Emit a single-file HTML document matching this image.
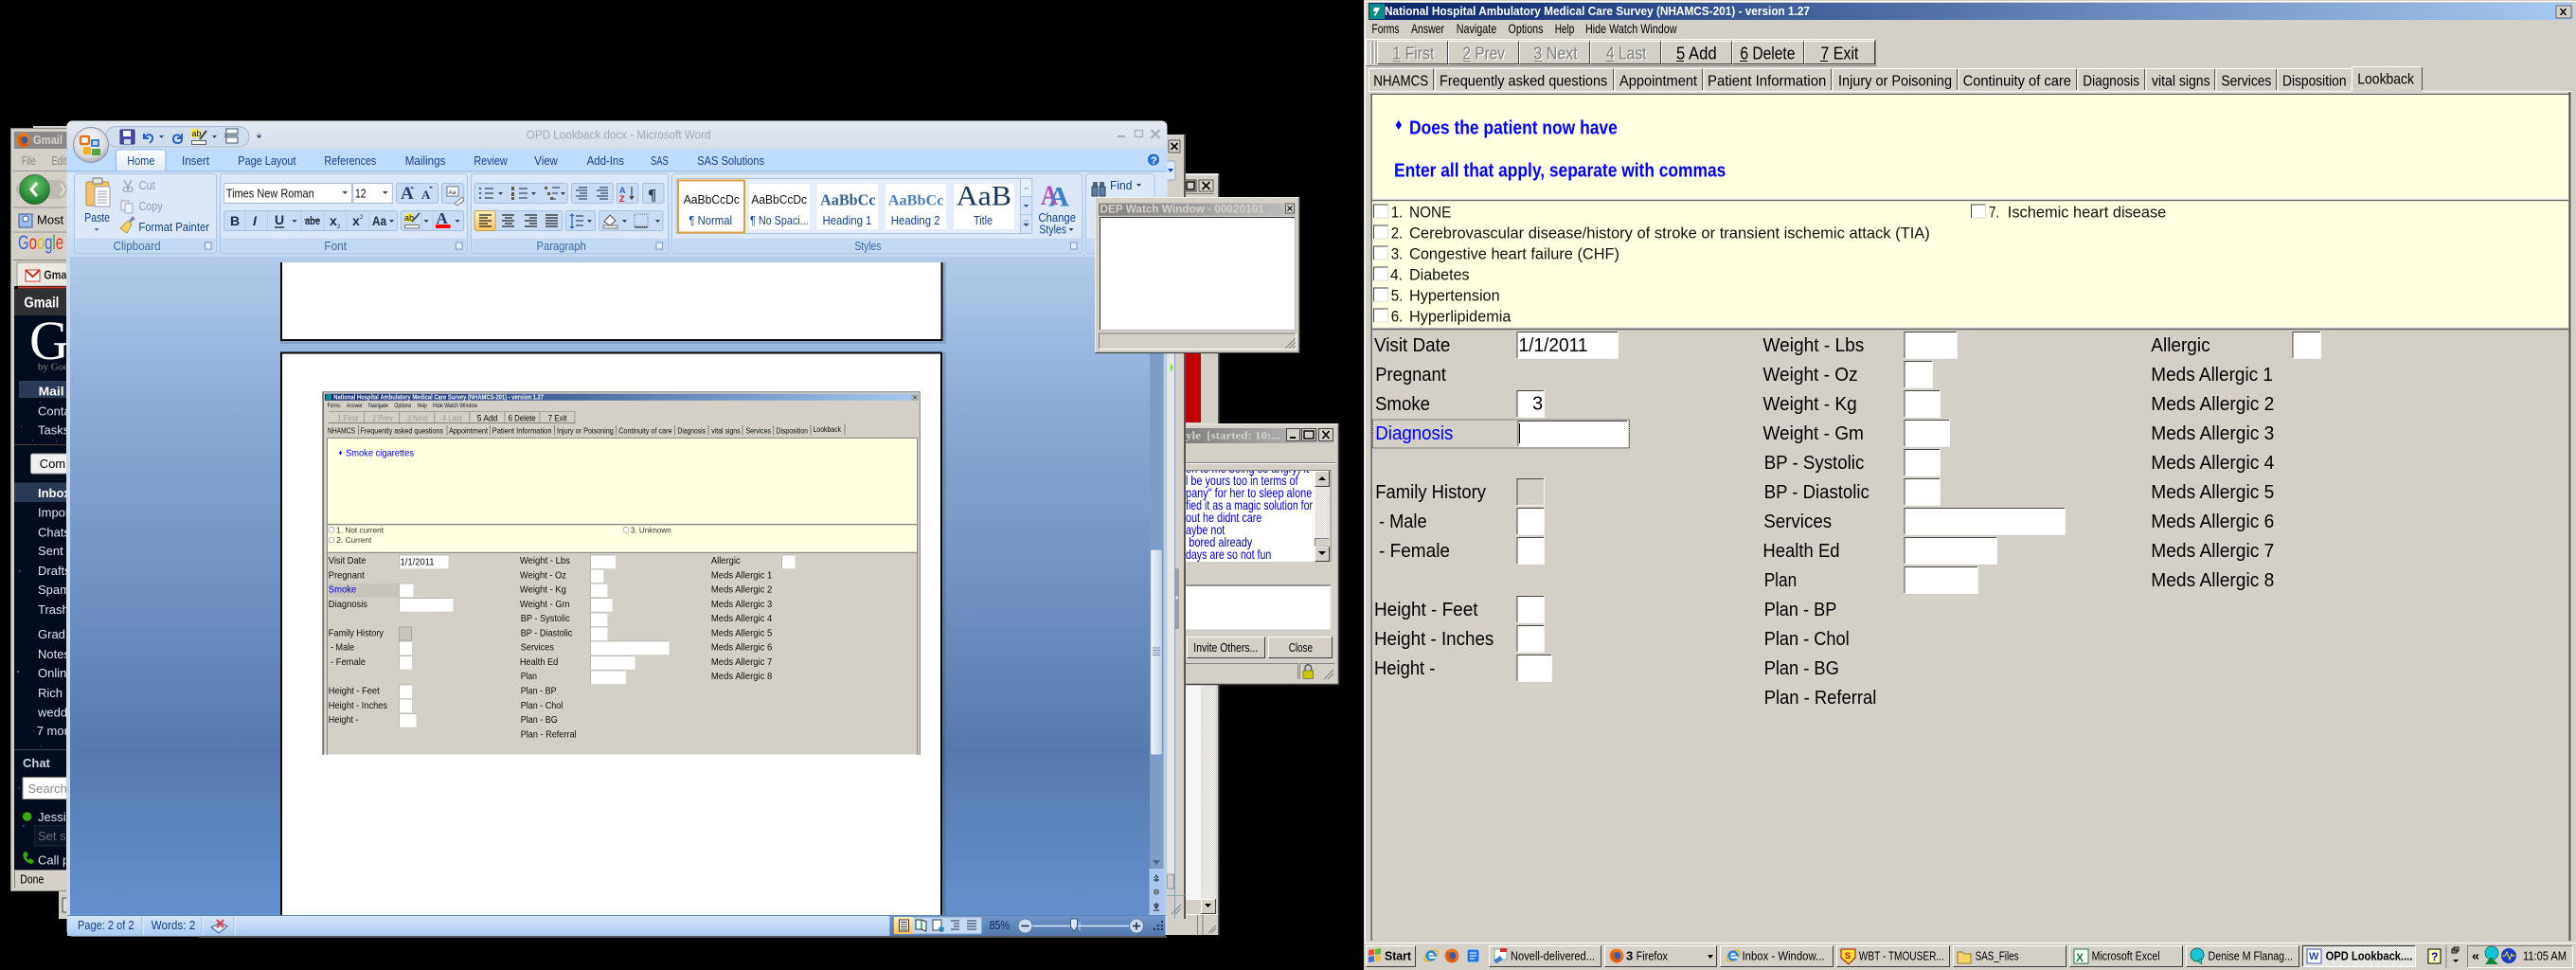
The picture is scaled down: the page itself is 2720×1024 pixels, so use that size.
<!DOCTYPE html>
<html><head><meta charset="utf-8"><title>OPD Lookback</title>
<style>
html,body{margin:0;padding:0;background:#000;width:2720px;height:1024px;overflow:hidden}
svg{display:block}
text{font-family:"Liberation Sans",sans-serif;white-space:pre}
.s{font-family:"Liberation Serif",serif}
.n{fill:none}
.hl{fill:none;stroke:#fff;stroke-width:1}
.sd{fill:none;stroke:#404040;stroke-width:1}
.wd{fill:#15428b}
.lb{fill:#3e6aaa}
.gm{fill:#dfe5ec;font-size:13px}
.b{fill:#fff;stroke:#a8bdd8;stroke-width:1}
.g{fill:#c9dcf4;stroke:#a5bfdf;stroke-width:1}
.ln{stroke:#3d4a5e;stroke-width:1.3;fill:none}
</style></head><body>
<svg width="2720" height="1024" viewBox="0 0 2720 1024" xmlns="http://www.w3.org/2000/svg">
<defs>
<linearGradient id="tb" x1="0" x2="1" y1="0" y2="0"><stop offset="0" stop-color="#0a246a"/><stop offset="1" stop-color="#a6caf0"/></linearGradient>
<linearGradient id="ig" x1="0" x2="1" y1="0" y2="0"><stop offset="0" stop-color="#808080"/><stop offset="1" stop-color="#c0c0c0"/></linearGradient>
<linearGradient id="doc" x1="0" x2="0" y1="0" y2="1"><stop offset="0" stop-color="#b3cbe9"/><stop offset=".22" stop-color="#8cacd8"/><stop offset=".75" stop-color="#567aaf"/><stop offset="1" stop-color="#6390cd"/></linearGradient>
<linearGradient id="rt" x1="0" x2="0" y1="0" y2="1"><stop offset="0" stop-color="#e4e9f1"/><stop offset="1" stop-color="#d6deea"/></linearGradient>
<linearGradient id="rb" x1="0" x2="0" y1="0" y2="1"><stop offset="0" stop-color="#dbe7f7"/><stop offset=".7" stop-color="#d0e0f5"/><stop offset="1" stop-color="#c3d8f2"/></linearGradient>
<linearGradient id="hm" x1="0" x2="0" y1="0" y2="1"><stop offset="0" stop-color="#fff"/><stop offset="1" stop-color="#dce9f9"/></linearGradient>
<linearGradient id="st" x1="0" x2="0" y1="0" y2="1"><stop offset="0" stop-color="#d5e5fa"/><stop offset=".5" stop-color="#c2d8f5"/><stop offset="1" stop-color="#a9c9f0"/></linearGradient>
<linearGradient id="stD" x1="0" x2="0" y1="0" y2="1"><stop offset="0" stop-color="#6f95c9"/><stop offset="1" stop-color="#4f78ad"/></linearGradient>
<linearGradient id="or" x1="0" x2="0" y1="0" y2="1"><stop offset="0" stop-color="#fff0b8"/><stop offset="1" stop-color="#fdc35f"/></linearGradient>
<linearGradient id="sb" x1="0" x2="1" y1="0" y2="0"><stop offset="0" stop-color="#f2f5fa"/><stop offset=".5" stop-color="#d8e2f0"/><stop offset="1" stop-color="#c4d2e6"/></linearGradient>
<radialGradient id="ob" cx=".45" cy=".35" r=".7"><stop offset="0" stop-color="#fff"/><stop offset=".7" stop-color="#d5d8dc"/><stop offset="1" stop-color="#9aa1aa"/></radialGradient>
<radialGradient id="grn" cx=".5" cy=".35" r=".7"><stop offset="0" stop-color="#6cc86c"/><stop offset="1" stop-color="#0d6e1d"/></radialGradient>
<pattern id="dth" width="2" height="2" patternUnits="userSpaceOnUse"><rect width="2" height="2" fill="#fff"/><rect width="1" height="1" fill="#d4d0c8"/><rect x="1" y="1" width="1" height="1" fill="#d4d0c8"/></pattern>
<filter id="bl" x="0" y="0" width="1" height="1"><feGaussianBlur stdDeviation=".25"/></filter>
<g id="ff"><circle cx="8" cy="8" r="7.5" fill="#e9781f"/><circle cx="8.5" cy="8" r="4" fill="#3c5aa8"/><path d="M3 3C1 8 3 14 8 15c4 0 7-3 7-6-1 3-4 4-6 3C6 11 5 8 6 5 5 5 4 4 3 3z" fill="#d9590f"/></g>
<g id="ie"><ellipse cx="8" cy="8" rx="8" ry="4.5" transform="rotate(-35 8 8)" fill="none" stroke="#e8b21e" stroke-width="1.4"/><circle cx="8" cy="8" r="5.6" fill="#2f87d8"/><circle cx="8" cy="8" r="3" fill="#fff"/><rect x="5" y="7.3" width="6" height="1.4" fill="#2f87d8"/><rect x="9" y="8.7" width="4" height="2" fill="#fff"/></g>
<g id="q"><circle cx="8" cy="7" r="7" fill="#17c4d6" stroke="#063" stroke-width=".8"/><path d="M8 13l5 4-1-6z" fill="#17c4d6" stroke="#063" stroke-width=".6"/></g>
</defs>

<rect width="2720" height="1024" fill="#000"/>

<!-- ========== RIGHT WINDOW ========== -->
<rect x="1440" y="0" width="1280" height="996" fill="#d4d0c8"/>
<rect x="1441" y="1" width="1279" height="1" fill="#fff"/>
<rect x="1441" y="1" width="1" height="994" fill="#fff"/>
<rect x="1445" y="3" width="1272" height="18" fill="url(#tb)"/>
<rect x="1446" y="4" width="16" height="16" fill="#0a8a8a"/><path d="M1451 8h6l-2 4-3 5-1-1 2-4h-3z" fill="#fff"/>
<text x="1462" y="16" font-size="13" font-weight="bold" fill="#fff" textLength="449" lengthAdjust="spacingAndGlyphs">National Hospital Ambulatory Medical Care Survey (NHAMCS-201) - version 1.27</text>
<rect x="2699" y="6" width="16" height="13" fill="#d4d0c8" stroke="#404040" stroke-width=".7"/><path d="M2703.5 9l6 7m0-7l-6 7" stroke="#000" stroke-width="1.4"/>

<g font-size="14" fill="#000">
<text x="1448.5" y="35" textLength="29" lengthAdjust="spacingAndGlyphs">Forms</text>
<text x="1490" y="35" textLength="35" lengthAdjust="spacingAndGlyphs">Answer</text>
<text x="1537.7" y="35" textLength="42.5" lengthAdjust="spacingAndGlyphs">Navigate</text>
<text x="1592.5" y="35" textLength="37" lengthAdjust="spacingAndGlyphs">Options</text>
<text x="1641.7" y="35" textLength="20.6" lengthAdjust="spacingAndGlyphs">Help</text>
<text x="1674" y="35" textLength="96.5" lengthAdjust="spacingAndGlyphs">Hide Watch Window</text>
</g>

<!-- toolbar -->
<path class="hl" d="M1442.5 69V41.5H1980"/><path d="M1442.5 69.5H1980.5V41.5" fill="none" stroke="#808080"/>
<path d="M1447.5 44V67M1451.5 44V67" stroke="#fff" stroke-width="1" fill="none"/><path d="M1449 44V67M1453 44V67" stroke="#808080" stroke-width="1" fill="none"/>
<g>
<path class="hl" d="M1454.5 67V43.5H1528M1529.5 67V43.5H1603M1604.5 67V43.5H1678M1679.5 67V43.5H1753M1754.5 67V43.5H1828M1829.5 67V43.5H1904M1905.5 67V43.5H1979"/>
<path class="sd" d="M1454.5 67.5H1528.5V43.5M1529.5 67.5H1603.5V43.5M1604.5 67.5H1678.5V43.5M1679.5 67.5H1753.5V43.5M1754.5 67.5H1828.5V43.5M1829.5 67.5H1904.5V43.5M1905.5 67.5H1979.5V43.5"/>
</g>
<g font-size="18" fill="#fff">
<text x="1471.4" y="63.7" textLength="44" lengthAdjust="spacingAndGlyphs">1 First</text>
<text x="1545.5" y="63.7" textLength="44.5" lengthAdjust="spacingAndGlyphs">2 Prev</text>
<text x="1620.4" y="63.7" textLength="46.3" lengthAdjust="spacingAndGlyphs">3 Next</text>
<text x="1697" y="63.7" textLength="42.5" lengthAdjust="spacingAndGlyphs">4 Last</text>
</g>
<g font-size="18" fill="#808080">
<text x="1470.4" y="62.7" textLength="44" lengthAdjust="spacingAndGlyphs">1 First</text>
<text x="1544.5" y="62.7" textLength="44.5" lengthAdjust="spacingAndGlyphs">2 Prev</text>
<text x="1619.4" y="62.7" textLength="46.3" lengthAdjust="spacingAndGlyphs">3 Next</text>
<text x="1696" y="62.7" textLength="42.5" lengthAdjust="spacingAndGlyphs">4 Last</text>
</g>
<g font-size="18" fill="#000">
<text x="1770" y="62.7" textLength="42.6" lengthAdjust="spacingAndGlyphs">5 Add</text>
<text x="1837.4" y="62.7" textLength="58" lengthAdjust="spacingAndGlyphs">6 Delete</text>
<text x="1922.4" y="62.7" textLength="40" lengthAdjust="spacingAndGlyphs">7 Exit</text>
</g>
<path d="M1471 64.5h8M1545 64.5h8M1620 64.5h8M1696 64.5h8" stroke="#808080"/><path d="M1770 64.5h8M1837 64.5h8M1922 64.5h8" stroke="#000"/>

<!-- tabs -->
<path class="hl" d="M1445.5 96V72.5H1513M1515.5 96V72.5H1703M1705 96V72.5H1797M1799 96V72.5H1933M1935 96V72.5H2066M2068 96V72.5H2192M2194 96V72.5H2264M2266 96V72.5H2339M2340 96V72.5H2404M2405 96V72.5H2482M2483.5 96V70.5H2557"/>
<path d="M1513.5 73V95M1703.5 73V95M1797.5 73V95M1933.5 73V95M2066.5 73V95M2192.5 73V95M2264.5 73V95M2338.5 73V95M2403.5 73V95M2557.5 71V95" stroke="#555" fill="none"/>
<path d="M1445 96.5H2483M2558 96.5H2716" stroke="#fff" fill="none"/>
<g font-size="16" fill="#000">
<text x="1450.2" y="90.7" textLength="58" lengthAdjust="spacingAndGlyphs">NHAMCS</text>
<text x="1520" y="90.7" textLength="177.3" lengthAdjust="spacingAndGlyphs">Frequently asked questions</text>
<text x="1710" y="90.7" textLength="82" lengthAdjust="spacingAndGlyphs">Appointment</text>
<text x="1803" y="90.7" textLength="125.3" lengthAdjust="spacingAndGlyphs">Patient Information</text>
<text x="1941" y="90.7" textLength="120" lengthAdjust="spacingAndGlyphs">Injury or Poisoning</text>
<text x="2072.6" y="90.7" textLength="114.4" lengthAdjust="spacingAndGlyphs">Continuity of care</text>
<text x="2199.3" y="90.7" textLength="59.7" lengthAdjust="spacingAndGlyphs">Diagnosis</text>
<text x="2272" y="90.7" textLength="61.6" lengthAdjust="spacingAndGlyphs">vital signs</text>
<text x="2345.4" y="90.7" textLength="53" lengthAdjust="spacingAndGlyphs">Services</text>
<text x="2410" y="90.7" textLength="67.5" lengthAdjust="spacingAndGlyphs">Disposition</text>
<text x="2489.3" y="88.3" textLength="59.7" lengthAdjust="spacingAndGlyphs">Lookback</text>
</g>
<!-- frame -->
<rect x="1447.5" y="99" width="1265" height="1.3" fill="#555"/>
<rect x="1447.5" y="99" width="1.3" height="894" fill="#555"/>
<rect x="2712.4" y="97" width="2" height="896" fill="#555"/>
<rect x="1449" y="100" width="1263" height="109.5" fill="#ffffe1"/>
<rect x="1449" y="209.5" width="1263" height="1" fill="#eee"/><rect x="1449" y="211" width="1263" height="1.3" fill="#666"/>
<rect x="1449" y="212.3" width="1263" height="133" fill="#ffffe1"/>
<rect x="1449" y="345.3" width="1263" height="1" fill="#eee"/><rect x="1449" y="346.7" width="1263" height="1.5" fill="#666"/>

<path d="M1476.8 127l3.2 5-3.2 5-3.2-5z" fill="#00f"/>
<text x="1488" y="141.7" font-size="20" font-weight="bold" fill="#00f" textLength="219.8" lengthAdjust="spacingAndGlyphs">Does the patient now have</text>
<text x="1472" y="186.7" font-size="20" font-weight="bold" fill="#00f" textLength="350.3" lengthAdjust="spacingAndGlyphs">Enter all that apply, separate with commas</text>

<!-- checkboxes -->
<path d="M1450.5 216h15v14h-15zM1450.5 238h15v14h-15zM1450.5 260h15v14h-15zM1450.5 282h15v14h-15zM1450.5 304h15v14h-15zM1450.5 326h15v14h-15zM2081.5 216h15v14h-15z" fill="#fff" stroke="#ddd"/>
<path d="M1450.5 230V216H1465.5M1450.5 252V238H1465.5M1450.5 274V260H1465.5M1450.5 296V282H1465.5M1450.5 318V304H1465.5M1450.5 340V326H1465.5M2081.5 230V216H2096.5" class="n" stroke="#444" stroke-width="1"/>
<g font-size="17" fill="#111">
<text x="1468.7" y="229.3" textLength="12.6" lengthAdjust="spacingAndGlyphs">1.</text><text x="1488" y="229.3" textLength="44.3" lengthAdjust="spacingAndGlyphs">NONE</text>
<text x="1468.7" y="251.3" textLength="12.6" lengthAdjust="spacingAndGlyphs">2.</text><text x="1488" y="251.3" textLength="549.8" lengthAdjust="spacingAndGlyphs">Cerebrovascular disease/history of stroke or transient ischemic attack (TIA)</text>
<text x="1468.7" y="273.3" textLength="12.6" lengthAdjust="spacingAndGlyphs">3.</text><text x="1488" y="273.3" textLength="222" lengthAdjust="spacingAndGlyphs">Congestive heart failure (CHF)</text>
<text x="1468" y="295.3" textLength="13" lengthAdjust="spacingAndGlyphs">4.</text><text x="1488" y="295.3" textLength="63.6" lengthAdjust="spacingAndGlyphs">Diabetes</text>
<text x="1468.7" y="317.3" textLength="12.6" lengthAdjust="spacingAndGlyphs">5.</text><text x="1488" y="317.3" textLength="95.6" lengthAdjust="spacingAndGlyphs">Hypertension</text>
<text x="1468.7" y="339.3" textLength="12.6" lengthAdjust="spacingAndGlyphs">6.</text><text x="1488" y="339.3" textLength="107.4" lengthAdjust="spacingAndGlyphs">Hyperlipidemia</text>
<text x="2100" y="229.3" textLength="11.3" lengthAdjust="spacingAndGlyphs">7.</text><text x="2119.8" y="229.3" textLength="167.5" lengthAdjust="spacingAndGlyphs">Ischemic heart disease</text>
</g>

<!-- form inputs -->
<path fill="#fff" d="M1602 350h106v28h-106zM1602 412h28v28h-28zM1603 444h115v27h-115zM1602 536h28v28h-28zM1602 567h28v28h-28zM1602 629h28v28h-28zM1602 660h28v28h-28zM1602 691h36v28h-36zM2011 350h55v28h-55zM2011 381h29v28h-29zM2011 412h37v28h-37zM2011 443h47v28h-47zM2011 474h37v28h-37zM2011 505h37v28h-37zM2011 536h169v28h-169zM2011 567h97v28h-97zM2011 598h77v28h-77zM2421 350h29v28h-29z"/>
<path fill="none" stroke="#f7f6f2" d="M1708.5 350V378.5H1602M1630.5 412V440.5H1602M1718.5 444V471.5H1603M1630.5 505V533.5H1602M1630.5 536V564.5H1602M1630.5 567V595.5H1602M1630.5 629V657.5H1602M1630.5 660V688.5H1602M1638.5 691V719.5H1602M2066.5 350V378.5H2011M2040.5 381V409.5H2011M2048.5 412V440.5H2011M2058.5 443V471.5H2011M2048.5 474V502.5H2011M2048.5 505V533.5H2011M2180.5 536V564.5H2011M2108.5 567V595.5H2011M2088.5 598V626.5H2011M2450.5 350V378.5H2421"/>
<path fill="none" stroke="#4a4a4a" d="M1602 378V350.5H1708M1602 440V412.5H1630M1603 471V444.5H1718M1602 533V505.5H1630M1602 564V536.5H1630M1602 595V567.5H1630M1602 657V629.5H1630M1602 688V660.5H1630M1602 719V691.5H1638M2011 378V350.5H2066M2011 409V381.5H2040M2011 440V412.5H2048M2011 471V443.5H2058M2011 502V474.5H2048M2011 533V505.5H2048M2011 564V536.5H2180M2011 595V567.5H2108M2011 626V598.5H2088M2421 378V350.5H2450"/>
<rect x="1449.5" y="443" width="271" height="30" fill="none" stroke="#333" stroke-width="1" stroke-dasharray="1 1"/>
<rect x="1604" y="447" width="1" height="21" fill="#000"/>

<g font-size="20" fill="#000">
<text x="1603.5" y="371" textLength="73" lengthAdjust="spacingAndGlyphs">1/1/2011</text>
<text x="1618" y="432.7" textLength="9">3</text>
<text x="1451" y="371" textLength="80.4" lengthAdjust="spacingAndGlyphs">Visit Date</text>
<text x="1452.3" y="402" textLength="74.5" lengthAdjust="spacingAndGlyphs">Pregnant</text>
<text x="1452" y="433" textLength="58" lengthAdjust="spacingAndGlyphs">Smoke</text>
<text x="1452.3" y="464" textLength="82.1" fill="#00f" lengthAdjust="spacingAndGlyphs">Diagnosis</text>
<text x="1452.3" y="526" textLength="116.7" lengthAdjust="spacingAndGlyphs">Family History</text>
<text x="1456" y="557" textLength="50.6" lengthAdjust="spacingAndGlyphs">- Male</text>
<text x="1456" y="588" textLength="75" lengthAdjust="spacingAndGlyphs">- Female</text>
<text x="1451" y="650" textLength="109.5" lengthAdjust="spacingAndGlyphs">Height - Feet</text>
<text x="1451" y="681" textLength="126.3" lengthAdjust="spacingAndGlyphs">Height - Inches</text>
<text x="1451" y="712" textLength="64.4" lengthAdjust="spacingAndGlyphs">Height -</text>
<text x="1861.4" y="371" textLength="106.9" lengthAdjust="spacingAndGlyphs">Weight - Lbs</text>
<text x="1861.4" y="402" textLength="100.2" lengthAdjust="spacingAndGlyphs">Weight - Oz</text>
<text x="1861.4" y="433" textLength="99.3" lengthAdjust="spacingAndGlyphs">Weight - Kg</text>
<text x="1861.4" y="464" textLength="106.5" lengthAdjust="spacingAndGlyphs">Weight - Gm</text>
<text x="1862.7" y="495" textLength="105.6" lengthAdjust="spacingAndGlyphs">BP - Systolic</text>
<text x="1862.7" y="526" textLength="111.1" lengthAdjust="spacingAndGlyphs">BP - Diastolic</text>
<text x="1862.2" y="557" textLength="72" lengthAdjust="spacingAndGlyphs">Services</text>
<text x="1861.4" y="588" textLength="81.2" lengthAdjust="spacingAndGlyphs">Health Ed</text>
<text x="1862.7" y="619" textLength="34.5" lengthAdjust="spacingAndGlyphs">Plan</text>
<text x="1862.7" y="650" textLength="76.6" lengthAdjust="spacingAndGlyphs">Plan - BP</text>
<text x="1862.7" y="681" textLength="90" lengthAdjust="spacingAndGlyphs">Plan - Chol</text>
<text x="1862.7" y="712" textLength="79.1" lengthAdjust="spacingAndGlyphs">Plan - BG</text>
<text x="1862.7" y="743" textLength="118.6" lengthAdjust="spacingAndGlyphs">Plan - Referral</text>
<text x="2271.3" y="371" textLength="62.3" lengthAdjust="spacingAndGlyphs">Allergic</text>
<text x="2271.3" y="402" textLength="128.7" lengthAdjust="spacingAndGlyphs">Meds Allergic 1</text>
<text x="2271.3" y="433" textLength="130" lengthAdjust="spacingAndGlyphs">Meds Allergic 2</text>
<text x="2271.3" y="464" textLength="130" lengthAdjust="spacingAndGlyphs">Meds Allergic 3</text>
<text x="2271.3" y="495" textLength="130" lengthAdjust="spacingAndGlyphs">Meds Allergic 4</text>
<text x="2271.3" y="526" textLength="130" lengthAdjust="spacingAndGlyphs">Meds Allergic 5</text>
<text x="2271.3" y="557" textLength="130" lengthAdjust="spacingAndGlyphs">Meds Allergic 6</text>
<text x="2271.3" y="588" textLength="130" lengthAdjust="spacingAndGlyphs">Meds Allergic 7</text>
<text x="2271.3" y="619" textLength="130" lengthAdjust="spacingAndGlyphs">Meds Allergic 8</text>
</g>

<!-- taskbar -->
<rect x="1440" y="995" width="1280" height="29" fill="#d4d0c8"/>
<rect x="1440" y="995" width="1280" height="1" fill="#fff"/>
<path class="hl" d="M1442.5 1020V998.5H1494M1572.5 1020V998.5H1690M1694.5 1020V998.5H1812M1816.5 1020V998.5H1935M1939.5 1020V998.5H2058M2062.5 1020V998.5H2181M2185.5 1020V998.5H2304M2308.5 1020V998.5H2427"/>
<path class="sd" d="M1442.5 1020.5H1494.5V998.5M1572.5 1020.5H1690.5V998.5M1694.5 1020.5H1812.5V998.5M1816.5 1020.5H1935.5V998.5M1939.5 1020.5H2058.5V998.5M2062.5 1020.5H2181.5V998.5M2185.5 1020.5H2304.5V998.5M2308.5 1020.5H2427.5V998.5"/>
<rect x="2431" y="998" width="119" height="22" fill="url(#dth)"/>
<path d="M2431.5 1020V998.5H2550" class="n" stroke="#333"/><path d="M2431.5 1020.5H2550.5V998.5" class="n" stroke="#fff"/>
<!-- start flag -->
<path d="M1445 1003l6-1v6l-6 1z" fill="#e8562a"/><path d="M1452 1002l6-1v6l-6 1z" fill="#6cb33f"/><path d="M1445 1010l6-1v6l-6 1z" fill="#3f6fd1"/><path d="M1452 1009l6-1v6l-6 1z" fill="#f2c12e"/>
<text x="1462" y="1013.5" font-size="13" font-weight="bold" fill="#000" textLength="28" lengthAdjust="spacingAndGlyphs">Start</text>
<use href="#ie" x="1503" y="1001"/><use href="#ff" x="1525" y="1001"/>
<rect x="1549" y="1002" width="13" height="14" rx="2" fill="#2a78d8" stroke="#cde" /><path d="M1552 1006h7M1552 1009h7M1552 1012h5" stroke="#fff"/>
<rect x="1578" y="1002" width="13" height="11" fill="#fff" stroke="#7a8" /><rect x="1584" y="1001" width="7" height="4" fill="#c33"/><path d="M1577 1014l7-5 3 4-7 4z" fill="#3c7cc8"/>
<use href="#ff" x="1699" y="1001"/>
<use href="#ie" x="1822" y="1001"/>
<path d="M1944 1002h15v9l-7 7-8-7z" fill="#f6e23a" stroke="#b00"/><text x="1948" y="1012" font-size="9" font-weight="bold" fill="#c00">S</text>
<path d="M2067 1005h5l2 2h7v10h-14z" fill="#f5d66a" stroke="#997a20"/>
<rect x="2190" y="1002" width="15" height="15" fill="#fff" stroke="#1d7a3a"/><text x="2192" y="1015" font-size="12" font-weight="bold" fill="#1d7a3a">X</text>
<use href="#q" x="2312" y="1001"/>
<rect x="2436" y="1002" width="15" height="15" fill="#fff" stroke="#3c5aa8"/><text x="2438" y="1013" font-size="11" font-weight="bold" fill="#2a4a9a">W</text>
<g font-size="13" fill="#000">
<text x="1595" y="1013.5" textLength="89" lengthAdjust="spacingAndGlyphs">Novell-delivered...</text>
<text x="1717" y="1013.5" font-weight="bold" textLength="7">3</text>
<text x="1727.6" y="1013.5" textLength="33.4" lengthAdjust="spacingAndGlyphs">Firefox</text>
<text x="1839.5" y="1013.5" textLength="87" lengthAdjust="spacingAndGlyphs">Inbox - Window...</text>
<text x="1962.8" y="1013.5" textLength="90" lengthAdjust="spacingAndGlyphs">WBT - TMOUSER...</text>
<text x="2085.7" y="1013.5" textLength="45.8" lengthAdjust="spacingAndGlyphs">SAS_Files</text>
<text x="2208.6" y="1013.5" textLength="72" lengthAdjust="spacingAndGlyphs">Microsoft Excel</text>
<text x="2331.5" y="1013.5" textLength="89.5" lengthAdjust="spacingAndGlyphs">Denise M Flanag...</text>
<text x="2455.6" y="1013.5" font-weight="bold" textLength="91.8" lengthAdjust="spacingAndGlyphs">OPD Lookback....</text>
<text x="2664" y="1013.5" textLength="46" lengthAdjust="spacingAndGlyphs">11:05 AM</text>
</g>
<path d="M1803 1008h6l-3 4z" fill="#000"/>
<rect x="2564" y="1002" width="13" height="15" fill="#ffffb0" stroke="#000"/><text x="2567" y="1014" font-size="12" font-weight="bold" fill="#00a">?</text>
<rect x="2582.5" y="998" width="1" height="24" fill="#808080"/>
<rect x="2589" y="1002" width="5" height="4" fill="none" stroke="#000"/><rect x="2591" y="1000" width="5" height="4" fill="none" stroke="#000"/>
<path d="M2590 1013h6l-3 3z" fill="#000"/>
<path d="M2605.5 1021V998.5H2716" class="n" stroke="#808080"/><path d="M2605.5 1021.5H2716.5V998" class="n" stroke="#fff"/>
<text x="2610" y="1013.5" font-size="13" font-weight="bold" fill="#000" textLength="8" lengthAdjust="spacingAndGlyphs">«</text>
<circle cx="2631" cy="1006" r="7" fill="#17c4d6" stroke="#063" stroke-width=".7"/><path d="M2624 1018l6-8 8 8z" fill="#0c8c3a"/>
<circle cx="2649" cy="1009" r="8" fill="#1c3cc8"/><path d="M2642 1009h3l2-4 3 8 2-6 1 2h3" class="n" stroke="#ee0" stroke-width="1"/>

<!-- ========== GMAIL / FIREFOX (behind Word) ========== -->
<rect x="35" y="133" width="36" height="4" fill="#d4d0c8"/>
<rect x="11" y="135" width="60" height="806" fill="#d4d0c8"/>
<rect x="11.5" y="135.5" width="70" height="805" fill="none" stroke="#888"/>
<rect x="15" y="139" width="56" height="18" fill="#8a8a8a"/>
<use href="#ff" x="17" y="140"/>
<text x="35" y="152" font-size="13" font-weight="bold" fill="#d4d0c8" textLength="31" lengthAdjust="spacingAndGlyphs">Gmail</text>
<text x="22.8" y="174" font-size="13" fill="#8c8a84" textLength="15" lengthAdjust="spacingAndGlyphs">File</text>
<text x="54.5" y="174" font-size="13" fill="#8c8a84" textLength="16" lengthAdjust="spacingAndGlyphs">Edit</text>
<rect x="14" y="180" width="57" height="1" fill="#999"/>
<rect x="17" y="190" width="54" height="20" rx="10" fill="#bdbab2"/>
<ellipse cx="36.6" cy="200" rx="16" ry="15.7" fill="url(#grn)" stroke="#555" stroke-width=".6"/>
<path d="M39 193l-6 7 6 7" fill="none" stroke="#fff" stroke-width="3"/>
<path d="M64 194l4 6-4 6" fill="none" stroke="#e6e4de" stroke-width="2"/>
<rect x="14" y="218.5" width="57" height="1" fill="#999"/>
<rect x="20" y="226" width="14" height="14" fill="#9dbbe8" stroke="#3a5a9a"/><circle cx="27" cy="231" r="3" fill="#fff" stroke="#3a5a9a"/>
<text x="39" y="236.7" font-size="13" fill="#000">Most Visited</text>
<rect x="14" y="244.5" width="57" height="1" fill="#999"/>
<text x="19" y="263" font-size="21" textLength="48" lengthAdjust="spacingAndGlyphs"><tspan fill="#3a66d6">G</tspan><tspan fill="#d8342a">o</tspan><tspan fill="#e6b31e">o</tspan><tspan fill="#3a66d6">g</tspan><tspan fill="#2e9e44">l</tspan><tspan fill="#d8342a">e</tspan></text>
<rect x="14" y="274" width="57" height="1" fill="#808080"/>
<path d="M18 302V279q0-2 2-2h51v25z" fill="#ece9e2" stroke="#9a978f"/>
<rect x="27" y="285" width="15" height="12" fill="#fff" stroke="#c33"/><path d="M27 285l7.5 7 7.5-7" fill="none" stroke="#d22" stroke-width="2"/>
<text x="46.4" y="294.7" font-size="13" font-weight="bold" fill="#222" textLength="30" lengthAdjust="spacingAndGlyphs">Gmail</text>
<rect x="15" y="302" width="56" height="616" fill="#030c1c"/>
<rect x="19" y="302.5" width="52" height="2" fill="#c43b2c"/>
<rect x="15" y="305" width="56" height="28" fill="#2f3033"/>
<text x="25.4" y="324.7" font-size="16" font-weight="bold" fill="#fff" textLength="37" lengthAdjust="spacingAndGlyphs">Gmail</text>
<text x="31" y="379" class="s" font-size="58" fill="#fff">G</text>
<text x="40" y="390.7" class="s" font-size="11" fill="#888">by Google</text>
<rect x="20" y="402" width="51" height="18" fill="#2a3a55"/>
<text x="40.6" y="417.7" font-size="13" font-weight="bold" fill="#fff" textLength="27" lengthAdjust="spacingAndGlyphs">Mail</text>
<g class="gm">
<text x="40" y="438.5" fill="#dfe5ec">Contacts</text>
<text x="40" y="458.5" fill="#dfe5ec">Tasks</text>
</g>
<rect x="15" y="469" width="56" height="1" fill="#4a3a30"/>
<rect x="32.5" y="479" width="50" height="21" rx="2" fill="#f0f0f0" stroke="#999"/>
<text x="41.7" y="494" font-size="13" fill="#000">Compose</text>
<rect x="15" y="509.5" width="56" height="20.5" fill="#2a3a55"/>
<text x="40" y="525" font-size="13" font-weight="bold" fill="#fff">Inbox</text>
<g font-size="13" fill="#dfe5ec">
<text x="40" y="545.6">Important</text><text x="40" y="566.4">Chats</text><text x="40" y="586">Sent</text><text x="40" y="606.8">Drafts</text><text x="40" y="627.2">Spam</text><text x="40" y="648">Trash</text><text x="40" y="674.2">Grad</text><text x="40" y="695">Notes</text><text x="40" y="715">Online</text><text x="40" y="735.9">Rich</text><text x="40" y="756.3">wedding</text><text x="38.7" y="776">7 more</text>
</g>
<rect x="15" y="791" width="56" height="1" fill="#3a4658"/>
<text x="24" y="809.8" font-size="13" font-weight="bold" fill="#c8d4e0">Chat</text>
<rect x="24" y="820.6" width="60" height="23" fill="#fff" stroke="#888"/>
<text x="29.5" y="837" font-size="13" fill="#888">Search</text>
<circle cx="28.7" cy="862" r="4.8" fill="#39a80f"/>
<text x="40" y="866.8" font-size="13" fill="#dfe5ec">Jessica</text>
<rect x="36.7" y="871.5" width="40" height="21.5" fill="#0a1424" stroke="#1d2736"/>
<text x="40" y="887" font-size="13" fill="#666c74">Set status</text>
<path d="M25 900c-2 5 2 11 9 12l2-3-4-3-2 2c-1-1-2-2-2-4l2-1-2-4z" fill="#39a80f"/>
<text x="40" y="912.3" font-size="13" fill="#dfe5ec">Call phone</text>
<path fill="#3a70c0" d="M51 437h1.5v1.5h-1.5zM22 450h1v1h-1zM20 602h1.5v1.5h-1.5zM18 708h2v2h-2zM34 464h1v1h-1zM59 465h1v1h-1zM44 700h1v1h-1zM19 831h1.5v1.5h-1.5zM24 871h1.5v1.5h-1.5zM35 771h1v1h-1zM43 787h1v1h-1zM42 424h1v1h-1z"/>
<rect x="15" y="918" width="56" height="19" fill="#d4d0c8"/>
<path d="M15.5 937V918.5H71" class="n" stroke="#808080"/>
<text x="21.3" y="932.3" font-size="13" fill="#000" textLength="25" lengthAdjust="spacingAndGlyphs">Done</text>
<rect x="62" y="941" width="9" height="29" fill="#d4d0c8"/><rect x="66" y="948" width="5" height="15" fill="#ddd" stroke="#444"/>

<!-- ========== Behind windows on right of Word ========== -->
<!-- Window B -->
<rect x="1230" y="183" width="57" height="804" fill="#d4d0c8"/>
<rect x="1286" y="183" width="1.5" height="804" fill="#555"/>
<rect x="1245" y="184" width="42" height="1" fill="#fff"/>
<rect x="1251" y="190" width="12" height="12" fill="#d4d0c8" stroke="#333"/><rect x="1253" y="192" width="8" height="8" fill="none" stroke="#000" stroke-width="1.4"/>
<rect x="1266" y="190" width="15" height="12" fill="#d4d0c8" stroke="#555"/><path d="M1269.5 192l8 8m0-8l-8 8" stroke="#000" stroke-width="1.6"/>
<rect x="1252" y="204" width="30" height="1" fill="#808080"/>
<rect x="1252" y="370" width="16" height="76" fill="#c00000"/>
<rect x="1268" y="370" width="16" height="76" fill="#d4d0c8"/>
<rect x="1252" y="722" width="16" height="228" fill="#f6f6f6"/>
<rect x="1268" y="722" width="16" height="244" fill="url(#dth)"/>
<rect x="1268" y="949" width="15" height="15" fill="#d4d0c8"/><path d="M1268.5 964V949.5H1283" class="hl"/><path d="M1268.5 964.5H1283.5V949" class="sd"/><path d="M1272 954h7l-3.5 4z" fill="#000"/>
<path d="M1252 965.5h34" stroke="#fff"/><path d="M1264.5 966v21M1270 966v21" stroke="#808080"/>
<path d="M1276 985l8-8M1279 985l5-5" stroke="#808080"/>

<!-- Window A -->
<rect x="1228" y="142" width="24" height="828" fill="#d4d0c8"/>
<rect x="1250" y="142" width="2" height="828" fill="#555"/>
<rect x="1234" y="148" width="12" height="13" fill="#d4d0c8" stroke="#555"/><path d="M1236.5 151l7 7m0-7l-7 7" stroke="#000" stroke-width="1.6"/>
<rect x="1226" y="170" width="15" height="20" rx="2" fill="#dbe6f7" stroke="#9ab"/><path d="M1233 178l6 0-3 4z" fill="#2040c0"/>
<rect x="1232.7" y="372" width="7.3" height="552" fill="url(#dth)"/>
<rect x="1240" y="372" width="1" height="598" fill="#7f9fc8"/>
<rect x="1241" y="600" width="4" height="64" fill="#a0a0a0"/><path d="M1243.5 629l-2.5 2 2.5 2z" fill="#fff"/>
<path d="M1236 383l3 5-3 5z" fill="#8ddc3e"/>
<rect x="1232.7" y="923" width="7" height="15" fill="#d4d0c8" stroke="#666" stroke-width=".6"/>
<rect x="1229" y="945" width="22" height="1" fill="#8aa"/>
<path d="M1237 965l10-10M1241 965l6-6" stroke="#808080"/>

<!-- Chat window -->
<rect x="1252" y="447" width="161.3" height="275" fill="#d4d0c8"/>
<path d="M1252 722.5H1413.5V447" class="n" stroke="#404040" stroke-width="1.5"/>
<rect x="1252" y="447.5" width="161" height="1" fill="#eee"/>
<rect x="1252" y="452" width="156" height="16" fill="url(#ig)"/>
<text x="1252" y="463.5" font-size="12" font-weight="bold" class="s" fill="#d4d0c8" textLength="100" lengthAdjust="spacingAndGlyphs">yle  [started: 10:...</text>
<rect x="1358.5" y="452.5" width="14" height="13" fill="#d4d0c8" stroke="#444"/><rect x="1362" y="461" width="6" height="2" fill="#000"/>
<rect x="1374.5" y="452.5" width="15" height="13" fill="#d4d0c8" stroke="#444"/><rect x="1377" y="455" width="10" height="8" fill="none" stroke="#000" stroke-width="1.4"/>
<rect x="1392.5" y="452.5" width="15" height="13" fill="#d4d0c8" stroke="#444"/><path d="M1396.5 455l7 8m0-8l-7 8" stroke="#000" stroke-width="1.6"/>
<rect x="1252" y="488" width="158" height="1" fill="#808080"/><rect x="1252" y="489" width="158" height="1" fill="#fff"/>
<rect x="1252" y="497" width="153" height="96" fill="#fff"/>
<path d="M1252 496.5H1405V593" class="n" stroke="#808080"/>
<svg x="1252" y="497" width="136" height="96">
<g font-size="14" fill="#0000c8">
<text x="0" y="2" textLength="130" lengthAdjust="spacingAndGlyphs">en to me being so angry) it</text>
<text x="0" y="15" textLength="118.7" lengthAdjust="spacingAndGlyphs">l be yours too in terms of</text>
<text x="0" y="28" textLength="133.3" lengthAdjust="spacingAndGlyphs">pany" for her to sleep alone</text>
<text x="0" y="41" textLength="134" lengthAdjust="spacingAndGlyphs">fied it as a magic solution for</text>
<text x="0" y="54" textLength="80.3" lengthAdjust="spacingAndGlyphs">out he didnt care</text>
<text x="0" y="67" textLength="41.3" lengthAdjust="spacingAndGlyphs">aybe not</text>
<text x="3.3" y="80" textLength="67" lengthAdjust="spacingAndGlyphs">bored already</text>
<text x="0" y="93" textLength="90.3" lengthAdjust="spacingAndGlyphs">days are so not fun</text>
</g></svg>
<rect x="1388.5" y="497" width="15.5" height="95" fill="url(#dth)"/>
<rect x="1388.5" y="497" width="15" height="16" fill="#d4d0c8"/><path d="M1388.5 513V497.5H1403" class="hl"/><path d="M1388.5 513.5H1403.5V497" class="sd"/><path d="M1392 507h8l-4-4z" fill="#000"/>
<rect x="1388.5" y="568" width="15" height="8" fill="#d4d0c8"/><path d="M1388.5 576V568.5H1403M1388.5 576.5H1403.5" stroke="#808080" fill="none"/>
<rect x="1388.5" y="576.5" width="15" height="16" fill="#d4d0c8"/><path d="M1388.5 592V577H1403" class="hl"/><path d="M1388.5 592.5H1403.5V577" class="sd"/><path d="M1392 582h8l-4 4z" fill="#000"/>
<rect x="1252" y="617.5" width="153" height="47" fill="#fff"/>
<path d="M1252 618H1405" stroke="#444"/><path d="M1405 618V664.5H1252" class="n" stroke="#ddd"/>
<path class="hl" d="M1253.5 694V672.5H1335M1339.5 694V672.5H1406"/>
<path class="sd" d="M1253.5 694.5H1335.5V672.5M1339.5 694.5H1406.5V672.5"/>
<text x="1260.3" y="687.9" font-size="13" fill="#000" textLength="68" lengthAdjust="spacingAndGlyphs">Invite Others...</text>
<text x="1360.7" y="687.9" font-size="13" fill="#000" textLength="25.3" lengthAdjust="spacingAndGlyphs">Close</text>
<path d="M1252 700.5H1370.5V717M1372.5 717V700.5H1409" class="n" stroke="#808080"/>
<rect x="1376" y="708" width="10.7" height="8.4" fill="#c8c800" stroke="#555" stroke-width=".6"/><path d="M1378 708v-3a3.3 3.3 0 0 1 6.6 0v3" class="n" stroke="#555" stroke-width="1.4"/>
<path d="M1398 717l10-10M1402 717l6-6" stroke="#808080"/>

<!-- ========== WORD ========== -->
<rect x="70.5" y="127.5" width="1162" height="861" rx="6" fill="#bfdbff"/>
<path d="M70.5 157V134a6 6 0 0 1 6-6.5H1226a6 6 0 0 1 6 6.5V157z" fill="url(#rt)"/>
<rect x="70.5" y="157" width="1162" height="24" fill="#bfdbff"/>
<rect x="70.5" y="181" width="1162" height="90" fill="url(#rb)"/>
<rect x="70.5" y="180.5" width="1162" height="1" fill="#8db2e3"/>
<rect x="70" y="271" width="4" height="695" fill="#c8d9ee"/>
<rect x="74" y="271" width="1140" height="695" fill="url(#doc)"/>
<rect x="1214" y="271" width="14.5" height="695" fill="#7d9cc6"/>
<rect x="1228.5" y="271" width="3.5" height="695" fill="#b8cde8"/>
<!-- pages -->
<rect x="296" y="277" width="703" height="86" fill="#345" opacity=".22"/>
<rect x="296" y="277" width="699" height="82.5" fill="#fff"/>
<path d="M297 277V359H994.5V277" class="n" stroke="#000" stroke-width="2"/>
<rect x="296" y="372" width="703" height="594" fill="#345" opacity=".22"/>
<rect x="296" y="372" width="699" height="594" fill="#fff"/>
<path d="M297 966V372.5H994V966" class="n" stroke="#000" stroke-width="2"/>

<!-- embedded screenshot -->
<g filter="url(#bl)">
<rect x="340.5" y="413.5" width="631" height="383" fill="#d4d0c8"/>
<path d="M341 797V413.5H971.5V797" class="n" stroke="#333" stroke-width="1.2"/>
<rect x="343" y="415.7" width="627" height="7" fill="url(#tb)"/>
<rect x="344" y="416" width="6" height="6" fill="#0a8a8a"/>
<text x="352.3" y="421.5" font-size="7" font-weight="bold" fill="#fff" textLength="221.7" lengthAdjust="spacingAndGlyphs">National Hospital Ambulatory Medical Care Survey (NHAMCS-201) - version 1.27</text>
<path d="M963 417h6v5h-6z" fill="#d4d0c8" stroke="#555" stroke-width=".4"/><path d="M964.5 418l3 3m0-3l-3 3" stroke="#000" stroke-width=".6"/>
<g font-size="6" fill="#111">
<text x="345.6" y="430" textLength="14" lengthAdjust="spacingAndGlyphs">Forms</text>
<text x="365.8" y="430" textLength="17" lengthAdjust="spacingAndGlyphs">Answer</text>
<text x="389" y="430" textLength="21" lengthAdjust="spacingAndGlyphs">Navigate</text>
<text x="416.3" y="430" textLength="18" lengthAdjust="spacingAndGlyphs">Options</text>
<text x="440.7" y="430" textLength="10" lengthAdjust="spacingAndGlyphs">Help</text>
<text x="457" y="430" textLength="47" lengthAdjust="spacingAndGlyphs">Hide Watch Window</text>
</g>
<path d="M347.5 434.5H607V446.7M384.7 434.5V446.7M421.7 434.5V446.7M458.8 434.5V446.7M495.8 434.5V446.7M532.9 434.5V446.7M569.9 434.5V446.7" class="n" stroke="#777" stroke-width=".6"/>
<path d="M347 446.7H607" stroke="#555" stroke-width=".7"/>
<g font-size="9" fill="#a09d96">
<text x="356" y="444.3" textLength="22" lengthAdjust="spacingAndGlyphs">1 First</text>
<text x="393" y="444.3" textLength="21.6" lengthAdjust="spacingAndGlyphs">2 Prev</text>
<text x="429.7" y="444.3" textLength="22" lengthAdjust="spacingAndGlyphs">3 Next</text>
<text x="466.8" y="444.3" textLength="21" lengthAdjust="spacingAndGlyphs">4 Last</text>
</g>
<g font-size="9" fill="#111">
<text x="503.8" y="444.3" textLength="21.5" lengthAdjust="spacingAndGlyphs">5 Add</text>
<text x="536.7" y="444.3" textLength="29" lengthAdjust="spacingAndGlyphs">6 Delete</text>
<text x="578.7" y="444.3" textLength="19.8" lengthAdjust="spacingAndGlyphs">7 Exit</text>
</g>
<path d="M378.5 449V459M472 449V459M517.5 449V459M585.5 449V459M650.5 449V459M712.5 449V459M748 449V459M784 449V459M816.7 449V459M856 449V459M892 447V459" class="n" stroke="#666" stroke-width=".7"/>
<g font-size="8" fill="#111">
<text x="346" y="457.3" textLength="29" lengthAdjust="spacingAndGlyphs">NHAMCS</text>
<text x="380.5" y="457.3" textLength="87.5" lengthAdjust="spacingAndGlyphs">Frequently asked questions</text>
<text x="474" y="457.3" textLength="41" lengthAdjust="spacingAndGlyphs">Appointment</text>
<text x="519.8" y="457.3" textLength="62.7" lengthAdjust="spacingAndGlyphs">Patient Information</text>
<text x="588" y="457.3" textLength="59.8" lengthAdjust="spacingAndGlyphs">Injury or Poisoning</text>
<text x="653.2" y="457.3" textLength="56.4" lengthAdjust="spacingAndGlyphs">Continuity of care</text>
<text x="715.5" y="457.3" textLength="29.5" lengthAdjust="spacingAndGlyphs">Diagnosis</text>
<text x="751.3" y="457.3" textLength="30.3" lengthAdjust="spacingAndGlyphs">vital signs</text>
<text x="787.5" y="457.3" textLength="26.5" lengthAdjust="spacingAndGlyphs">Services</text>
<text x="819.5" y="457.3" textLength="33.5" lengthAdjust="spacingAndGlyphs">Disposition</text>
<text x="858.6" y="456" textLength="29.4" lengthAdjust="spacingAndGlyphs">Lookback</text>
</g>
<rect x="346" y="462.7" width="622" height="90" fill="#ffffe1"/>
<rect x="346" y="554.7" width="622" height="28" fill="#ffffe1"/>
<path d="M345.5 462V797M968.5 462V797" stroke="#777" stroke-width=".8"/><path d="M345.5 462.3H968M345.5 553.7H968M345.5 583.3H968" stroke="#777" stroke-width=".8"/>
<path d="M359.5 475.5l1.5 2.5-1.5 2.5-1.5-2.5z" fill="#00f"/>
<text x="365" y="481.7" font-size="10" fill="#00f" textLength="72" lengthAdjust="spacingAndGlyphs">Smoke cigarettes</text>
<circle cx="350" cy="559.3" r="3" fill="#fff" stroke="#888" stroke-width=".6"/><circle cx="350" cy="570" r="3" fill="#fff" stroke="#888" stroke-width=".6"/><circle cx="661" cy="559.3" r="3" fill="#fff" stroke="#888" stroke-width=".6"/>
<g font-size="8.5" fill="#333">
<text x="355.3" y="562.3" textLength="49.7" lengthAdjust="spacingAndGlyphs">1. Not current</text>
<text x="355.3" y="573" textLength="37" lengthAdjust="spacingAndGlyphs">2. Current</text>
<text x="665.9" y="562.3" textLength="42.9" lengthAdjust="spacingAndGlyphs">3. Unknown</text>
</g>
<rect x="346.8" y="616" width="74.5" height="14.5" fill="#c9c5bc"/>
<path fill="#fff" stroke="#f4f2ee" stroke-width=".5" d="M421.3 586h52v14h-52zM421.3 616h15v14h-15zM421.3 631.5h57v14h-57zM421.3 677h13.5v14h-13.5zM421.3 692.5h13.5v14h-13.5zM421.3 723h13.5v14h-13.5zM421.3 738h13.5v14h-13.5zM421.3 753.5h18v14h-18zM623.4 586h26.5v14h-26.5zM623.4 601h13.8v14h-13.8zM623.4 616h18v14h-18zM623.4 631.5h23v14h-23zM623.4 647h18v14h-18zM623.4 662h18v14h-18zM623.4 677h83v14h-83zM623.4 692.5h47v14h-47zM623.4 708h37.4v14h-37.4zM825.4 586h14v14h-14z"/>
<path fill="none" stroke="#8a8a86" stroke-width=".6" d="M421.3 600V586H473.3M421.3 630V616H436.3M421.3 645.5V631.5H478.3M421.3 691V677H434.8M421.3 706.5V692.5H434.8M421.3 737V723H434.8M421.3 752V738H434.8M421.3 767.5V753.5H439.3M623.4 600V586H649.9M623.4 615V601H637.2M623.4 630V616H641.4M623.4 645.5V631.5H646.4M623.4 661V647H641.4M623.4 676V662H641.4M623.4 691V677H706.4M623.4 706.5V692.5H670.4M623.4 722V708H660.8M825.4 600V586H839.4"/>
<rect x="421.3" y="662" width="13.5" height="14" fill="#cac6be" stroke="#888" stroke-width=".5"/>
<g font-size="10" fill="#111">
<text x="422.5" y="596.5" textLength="36" lengthAdjust="spacingAndGlyphs">1/1/2011</text>
<text x="346.8" y="595" textLength="39.6" lengthAdjust="spacingAndGlyphs">Visit Date</text>
<text x="346.8" y="610.3" textLength="37.9" lengthAdjust="spacingAndGlyphs">Pregnant</text>
<text x="346.8" y="625.6" textLength="29.5" fill="#00f" lengthAdjust="spacingAndGlyphs">Smoke</text>
<text x="346.8" y="640.8" textLength="41.2" lengthAdjust="spacingAndGlyphs">Diagnosis</text>
<text x="346.8" y="671.4" textLength="58.2" lengthAdjust="spacingAndGlyphs">Family History</text>
<text x="349" y="686.7" textLength="25.2" lengthAdjust="spacingAndGlyphs">- Male</text>
<text x="349" y="702" textLength="37" lengthAdjust="spacingAndGlyphs">- Female</text>
<text x="346.8" y="732.5" textLength="53.9" lengthAdjust="spacingAndGlyphs">Height - Feet</text>
<text x="346.8" y="747.8" textLength="62.2" lengthAdjust="spacingAndGlyphs">Height - Inches</text>
<text x="346.8" y="763" textLength="31.6" lengthAdjust="spacingAndGlyphs">Height -</text>
<text x="548.9" y="595" textLength="53" lengthAdjust="spacingAndGlyphs">Weight - Lbs</text>
<text x="548.9" y="610.3" textLength="49" lengthAdjust="spacingAndGlyphs">Weight - Oz</text>
<text x="548.9" y="625.6" textLength="49" lengthAdjust="spacingAndGlyphs">Weight - Kg</text>
<text x="548.9" y="640.8" textLength="52.6" lengthAdjust="spacingAndGlyphs">Weight - Gm</text>
<text x="549.7" y="656" textLength="52" lengthAdjust="spacingAndGlyphs">BP - Systolic</text>
<text x="549.7" y="671.4" textLength="54.7" lengthAdjust="spacingAndGlyphs">BP - Diastolic</text>
<text x="549.7" y="686.7" textLength="35.3" lengthAdjust="spacingAndGlyphs">Services</text>
<text x="548.9" y="702" textLength="40.4" lengthAdjust="spacingAndGlyphs">Health Ed</text>
<text x="549.7" y="717.2" textLength="17.3" lengthAdjust="spacingAndGlyphs">Plan</text>
<text x="549.7" y="732.5" textLength="37.9" lengthAdjust="spacingAndGlyphs">Plan - BP</text>
<text x="549.7" y="747.8" textLength="44.6" lengthAdjust="spacingAndGlyphs">Plan - Chol</text>
<text x="549.7" y="763" textLength="39.1" lengthAdjust="spacingAndGlyphs">Plan - BG</text>
<text x="549.7" y="778.3" textLength="58.9" lengthAdjust="spacingAndGlyphs">Plan - Referral</text>
<text x="750.9" y="595" textLength="30.7" lengthAdjust="spacingAndGlyphs">Allergic</text>
<text x="750.9" y="610.3" textLength="64.4" lengthAdjust="spacingAndGlyphs">Meds Allergic 1</text>
<text x="750.9" y="625.6" textLength="64.4" lengthAdjust="spacingAndGlyphs">Meds Allergic 2</text>
<text x="750.9" y="640.8" textLength="64.4" lengthAdjust="spacingAndGlyphs">Meds Allergic 3</text>
<text x="750.9" y="656" textLength="64.4" lengthAdjust="spacingAndGlyphs">Meds Allergic 4</text>
<text x="750.9" y="671.4" textLength="64.4" lengthAdjust="spacingAndGlyphs">Meds Allergic 5</text>
<text x="750.9" y="686.7" textLength="64.4" lengthAdjust="spacingAndGlyphs">Meds Allergic 6</text>
<text x="750.9" y="702" textLength="64.4" lengthAdjust="spacingAndGlyphs">Meds Allergic 7</text>
<text x="750.9" y="717.2" textLength="64.4" lengthAdjust="spacingAndGlyphs">Meds Allergic 8</text>
</g>
</g>

<!-- Word title & QAT -->
<rect x="111.6" y="133.5" width="151.4" height="21.5" rx="10.7" fill="#cfdded" stroke="#a9bbd2"/>
<circle cx="96" cy="153" r="18.5" fill="url(#ob)" stroke="#8b95a3"/>
<rect x="85" y="144" width="9" height="8" rx="1" fill="none" stroke="#e4761a" stroke-width="2.4"/>
<rect x="96" y="147" width="9" height="8" fill="#3d7fc9"/><rect x="88" y="155" width="8" height="8" fill="#f0b322"/><rect x="97" y="157" width="9" height="7" fill="#5aa13c"/>
<path d="M98 149h5v4h-5z" fill="#fff" opacity=".7"/>
<rect x="127" y="137" width="15" height="15" rx="1" fill="#4a4aa8" stroke="#2c2c80"/><rect x="130" y="138" width="8" height="6" fill="#fff"/><rect x="131" y="147" width="7" height="5" fill="#cdd"/>
<path d="M152 141v5h5M153 145c3-5 9-3 8 2-.6 2-2 3-3 4" class="n" stroke="#2b64c4" stroke-width="2"/>
<path d="M168 143h5l-2.5 3z" fill="#33507a"/>
<path d="M192 141v5h-5M191 145c-3-4-8-3-8 2 0 3 2 4 5 4 3 0 4-2 4-4" class="n" stroke="#2b64c4" stroke-width="2"/>
<rect x="202" y="136" width="9" height="9" fill="#ffe84c"/><text x="202.5" y="144" font-size="9" fill="#111">ab</text>
<path d="M211 147l7-9" stroke="#444" stroke-width="2"/><rect x="202.5" y="148.5" width="15" height="4" fill="#f4f4f4" stroke="#666"/>
<path d="M224 143h5l-2.5 3z" fill="#33507a"/>
<rect x="239" y="136" width="12" height="5" fill="#fff" stroke="#456"/><rect x="239" y="145" width="12" height="6" fill="#fff" stroke="#456"/><path d="M239 143h12M237 141l2 2-2 2" stroke="#456" fill="none"/>
<path d="M271 141h5M271 143h5l-2.5 3z" fill="#33507a" stroke="#33507a" stroke-width=".4"/>
<text x="555.8" y="146.7" font-size="13" fill="#a1a9b5" textLength="194.7" lengthAdjust="spacingAndGlyphs">OPD Lookback.docx - Microsoft Word</text>
<rect x="1180" y="143" width="8" height="2" fill="#a6aeb9"/><rect x="1198.5" y="137.5" width="8" height="7" fill="none" stroke="#a6aeb9" stroke-width="1.2"/><path d="M1215.5 137l9 9m0-9l-9 9" stroke="#a6aeb9" stroke-width="2"/>

<!-- Word ribbon tabs -->
<path d="M122.5 181V161q0-3 3-3H172q3 0 3 3v20z" fill="url(#hm)" stroke="#8db2e3"/>
<g font-size="13" class="wd">
<text x="134.4" y="174" textLength="29" lengthAdjust="spacingAndGlyphs">Home</text>
<text x="192" y="174" textLength="29" lengthAdjust="spacingAndGlyphs">Insert</text>
<text x="251.3" y="174" textLength="61.2" lengthAdjust="spacingAndGlyphs">Page Layout</text>
<text x="342.4" y="174" textLength="54.9" lengthAdjust="spacingAndGlyphs">References</text>
<text x="427.7" y="174" textLength="42.8" lengthAdjust="spacingAndGlyphs">Mailings</text>
<text x="500.4" y="174" textLength="35.3" lengthAdjust="spacingAndGlyphs">Review</text>
<text x="564.3" y="174" textLength="24.5" lengthAdjust="spacingAndGlyphs">View</text>
<text x="619.6" y="174" textLength="39.4" lengthAdjust="spacingAndGlyphs">Add-Ins</text>
<text x="687" y="174" textLength="18.7" lengthAdjust="spacingAndGlyphs">SAS</text>
<text x="736.3" y="174" textLength="70.7" lengthAdjust="spacingAndGlyphs">SAS Solutions</text>
</g>
<circle cx="1218" cy="168.5" r="6.8" fill="#2a76d4" stroke="#e8f0fa"/><text x="1215" y="173" font-size="11" font-weight="bold" fill="#fff">?</text>

<!-- Ribbon groups -->
<g fill="#dce8f7" stroke="#a8c3e6">
<rect x="78.6" y="183.5" width="150" height="84" rx="3"/>
<rect x="232.6" y="183.5" width="260.7" height="84" rx="3"/>
<rect x="497.5" y="183.5" width="208" height="84" rx="3"/>
<rect x="709.4" y="183.5" width="433.3" height="84" rx="3"/>
<rect x="1146.4" y="183.5" width="72.6" height="84" rx="3"/>
</g>
<g fill="#c3d8f1">
<rect x="79.6" y="251.7" width="148" height="15"/><rect x="233.6" y="251.7" width="258.7" height="15"/><rect x="498.5" y="251.7" width="206" height="15"/><rect x="710.4" y="251.7" width="431.3" height="15"/><rect x="1147.4" y="251.7" width="70.6" height="15"/>
</g>
<g font-size="13" class="lb">
<text x="119.6" y="264" textLength="50" lengthAdjust="spacingAndGlyphs">Clipboard</text>
<text x="342.4" y="264" textLength="23.6" lengthAdjust="spacingAndGlyphs">Font</text>
<text x="566.5" y="264" textLength="52.3" lengthAdjust="spacingAndGlyphs">Paragraph</text>
<text x="902.5" y="264" textLength="27.8" lengthAdjust="spacingAndGlyphs">Styles</text>
</g>
<path d="M216.5 256h6.5v7h-6.5zM481.5 256h6.5v7h-6.5zM693 256h6.5v7h-6.5zM1130.5 256h6.5v7h-6.5z" fill="#e6eef9" stroke="#7c99c0"/>

<!-- Clipboard -->
<rect x="91" y="192" width="24" height="25" rx="2" fill="#f0c46a" stroke="#b08838"/>
<rect x="98" y="188" width="10" height="6" rx="1" fill="#e4e4e4" stroke="#777"/>
<rect x="100" y="197" width="16" height="21" fill="#fff" stroke="#99a"/><path d="M103 202h10M103 205h10M103 208h10M103 211h10M103 214h10" stroke="#99a"/>
<g font-size="13" class="wd"><text x="89.3" y="234" textLength="26.7" lengthAdjust="spacingAndGlyphs">Paste</text>
<text x="146.4" y="244" textLength="74.6" lengthAdjust="spacingAndGlyphs">Format Painter</text></g>
<path d="M99.5 241h5l-2.5 3z" fill="#5577aa"/>
<path d="M131 190l5 9M139 190l-5 9" stroke="#9aa7b8" stroke-width="1.4"/><circle cx="132.5" cy="200" r="2.4" class="n" stroke="#9aa7b8" stroke-width="1.3"/><circle cx="137.5" cy="200" r="2.4" class="n" stroke="#9aa7b8" stroke-width="1.3"/>
<text x="146.4" y="200" font-size="13" fill="#8f9fb4" textLength="17.4" lengthAdjust="spacingAndGlyphs">Cut</text>
<rect x="128" y="212" width="8" height="10" fill="#eef2f7" stroke="#9aa7b8"/><rect x="132" y="215" width="8" height="10" fill="#eef2f7" stroke="#9aa7b8"/>
<text x="146.4" y="222" font-size="13" fill="#8f9fb4" textLength="25.5" lengthAdjust="spacingAndGlyphs">Copy</text>
<path d="M136 233l4-5 3 3-5 4z" fill="#889"/><path d="M127 241l8-8 4 4-5 9z" fill="#f4d35e" stroke="#8a7a30" stroke-width=".6"/>

<!-- Font -->
<rect class="b" x="236.6" y="193.5" width="134.8" height="21"/><rect class="b" x="372.8" y="193.5" width="41.5" height="21"/>
<text x="238.8" y="208.3" font-size="13" fill="#111" textLength="92.9" lengthAdjust="spacingAndGlyphs">Times New Roman</text>
<text x="375" y="208.3" font-size="13" fill="#111" textLength="11.6" lengthAdjust="spacingAndGlyphs">12</text>
<path d="M361.5 202h5.5l-2.7 3zM404 202h5.5l-2.7 3z" fill="#345"/>
<rect class="g" x="418.7" y="193.5" width="43.8" height="21" rx="2"/><rect class="g" x="466.5" y="193.5" width="23.2" height="21" rx="2"/>
<text x="423" y="210" font-size="19" class="s" fill="#24406e" font-weight="bold">A</text><text x="445" y="210" font-size="13" class="s" fill="#24406e" font-weight="bold">A</text>
<path d="M435 197l2 2h-4zM455 199l2-2h-4z" fill="#24406e"/>
<rect x="472" y="197" width="12" height="10" fill="#fff" stroke="#678"/><text x="473.5" y="205" font-size="6.5" fill="#224">Aa</text><path d="M480 215l8-7 2 3-7 6z" fill="#f8f4ee" stroke="#888"/>
<rect class="g" x="236.6" y="222.5" width="183" height="21" rx="2"/><rect class="g" x="423.2" y="222.5" width="66.5" height="21" rx="2"/>
<path d="M259 223v20M282.5 223v20M318 223v20M342 223v20M366 223v20M390 223v20M445 223v20M457 223v20" stroke="#b5cbe6"/>
<g class="s" fill="#1e2a40">
<text x="243" y="238" font-size="14" font-weight="bold">B</text>
<text x="267" y="238" font-size="14" font-style="italic" font-weight="bold">I</text>
<text x="290" y="237" font-size="14" font-weight="bold">U</text>
<text x="322" y="237" font-size="12" font-weight="bold" textLength="16" lengthAdjust="spacingAndGlyphs">abe</text>
<text x="348" y="238" font-size="14" font-weight="bold">x</text><text x="356" y="241" font-size="6">2</text>
<text x="372" y="238" font-size="14" font-weight="bold">x</text><text x="380" y="231" font-size="6">2</text>
<text x="393" y="238" font-size="14" font-weight="bold" textLength="15" lengthAdjust="spacingAndGlyphs">Aa</text>
</g>
<path d="M290 240h10" stroke="#1e2a40" stroke-width="1.3"/><path d="M321 232h17" stroke="#333"/>
<path d="M308.5 232h5l-2.5 3zM411 232h5l-2.5 3zM447.5 232h5l-2.5 3zM480.5 232h5l-2.5 3z" fill="#345"/>
<rect x="427" y="225" width="9" height="9" fill="#ffe84c"/><text x="427" y="233" font-size="9" fill="#111">ab</text><path d="M435 234l8-9" stroke="#555" stroke-width="2"/><rect x="427.5" y="237.5" width="15" height="3.4" fill="#f4f4f4" stroke="#777"/>
<text x="460.5" y="236" font-size="17" fill="#24406e" class="s" font-weight="bold">A</text>
<rect x="460" y="237" width="15.5" height="4" fill="#f00"/>

<!-- Paragraph -->
<rect class="g" x="501" y="193.5" width="98" height="21" rx="2"/><rect class="g" x="603.6" y="193.5" width="43.7" height="21" rx="2"/><rect class="g" x="651.3" y="193.5" width="22.7" height="21" rx="2"/><rect class="g" x="678.6" y="193.5" width="22.4" height="21" rx="2"/>
<rect class="g" x="501" y="222.5" width="92.8" height="21" rx="2"/><rect class="g" x="597.3" y="222.5" width="31.3" height="21" rx="2"/><rect class="g" x="632.6" y="222.5" width="67.4" height="21" rx="2"/>
<path class="ln" d="M512 199h9M512 204h9M512 209h9M548 199h9M548 204h9M548 209h9M583 198h8M583 204h6M583 210h4"/>
<path d="M506 198h2v2h-2zM506 203h2v2h-2zM506 208h2v2h-2z" fill="#2b64c4"/>
<path d="M540 197h3v4h-3zM540 203h3v4h-3zM540 208h3v3h-3zM575 197h3v3h-3zM578 203h3v3h-3zM581 208h3v3h-3z" fill="#6a5a3a"/>
<path d="M526 203h5l-2.5 3zM561 203h5l-2.5 3zM592 203h5l-2.5 3z" fill="#345"/>
<path class="ln" d="M611 198h9M608 201h12M612 204h8M608 207h12M611 210h9M633 198h9M630 201h12M634 204h8M630 207h12M633 210h9"/>
<text x="654" y="204" font-size="9" font-weight="bold" fill="#2b64c4">A</text><text x="654" y="213" font-size="9" font-weight="bold" fill="#c22">Z</text><path d="M667 197v13m-2-3l2 3 2-3" class="n" stroke="#222"/>
<text x="684" y="211" font-size="17" class="s" font-weight="bold" fill="#2a3a52">¶</text>
<rect x="501" y="222.5" width="22" height="21" rx="2" fill="url(#or)" stroke="#c9a050"/>
<path d="M506 227h13M506 230h9M506 233h13M506 236h9M506 239h13" stroke="#222" stroke-width="1.3"/>
<path d="M530 227h13M533 230h8M530 233h13M533 236h8M530 239h13M554 227h13M559 230h8M554 233h13M559 236h8M554 239h13M576 227h13M576 230h13M576 233h13M576 236h13M576 239h13" stroke="#222" stroke-width="1.3"/>
<path class="ln" d="M608 228h8M608 233h8M608 238h8"/><path d="M604 226v15M602 228l2-2 2 2M602 239l2 2 2-2" class="n" stroke="#2b64c4" stroke-width="1.2"/>
<path d="M620 232h5l-2.5 3zM657 232h5l-2.5 3zM692 232h5l-2.5 3z" fill="#345"/>
<path d="M638 234l6-7 6 6-6 5z" fill="#f4f6f8" stroke="#555"/><rect x="637" y="238" width="15" height="3" fill="#f8f8f8" stroke="#777"/>
<rect x="670" y="226" width="14" height="13" fill="none" stroke="#778" stroke-dasharray="1 1"/><path d="M670 240h14" stroke="#222"/>

<!-- Styles -->
<rect x="714" y="188.5" width="363.5" height="58" fill="#e4edf9" stroke="#a8c3e6"/>
<rect x="716" y="190.5" width="70" height="55" fill="#fff" stroke="#e0a040" stroke-width="2"/>
<rect x="791" y="194" width="63.8" height="48" fill="#fff"/><rect x="862.8" y="194" width="64.2" height="48" fill="#fff"/><rect x="935" y="194" width="64.2" height="48" fill="#fff"/><rect x="1007.2" y="194" width="63.8" height="48" fill="#fff"/>
<g font-size="13" fill="#111">
<text x="721.7" y="215" textLength="59.3" lengthAdjust="spacingAndGlyphs">AaBbCcDc</text>
<text x="793.4" y="215" textLength="58.6" lengthAdjust="spacingAndGlyphs">AaBbCcDc</text>
<text x="727.4" y="237" textLength="45.6" lengthAdjust="spacingAndGlyphs" class="wd">¶ Normal</text>
<text x="792" y="237" textLength="61.8" lengthAdjust="spacingAndGlyphs" class="wd">¶ No Spaci...</text>
<text x="868.5" y="237" textLength="51.9" lengthAdjust="spacingAndGlyphs" class="wd">Heading 1</text>
<text x="940.7" y="237" textLength="51.9" lengthAdjust="spacingAndGlyphs" class="wd">Heading 2</text>
<text x="1028" y="237" textLength="20" lengthAdjust="spacingAndGlyphs" class="wd">Title</text>
</g>
<text x="866" y="216.7" font-size="17" class="s" font-weight="bold" fill="#365f91" textLength="58.6" lengthAdjust="spacingAndGlyphs">AaBbCc</text>
<text x="937.8" y="216.7" font-size="16" class="s" font-weight="bold" fill="#4f81bd" textLength="58.6" lengthAdjust="spacingAndGlyphs">AaBbCc</text>
<text x="1009.6" y="216.7" font-size="30" class="s" fill="#17365d" textLength="58.4" lengthAdjust="spacingAndGlyphs">AaB</text>
<rect x="1077.5" y="188.5" width="12.3" height="19" fill="#e8eff9" stroke="#a8c3e6"/><rect x="1077.5" y="207.5" width="12.3" height="19" fill="#d5e3f5" stroke="#a8c3e6"/><rect x="1077.5" y="226.5" width="12.3" height="20" fill="#d5e3f5" stroke="#a8c3e6"/>
<path d="M1080.5 200l3-3 3 3z" fill="#b5c4d6"/><path d="M1080.5 216h6l-3 3z" fill="#345a8a"/><path d="M1080.5 233h6M1080.5 236h6l-3 3z" fill="#345a8a" stroke="#345a8a" stroke-width=".4"/>
<text x="1099" y="216" font-size="30" class="s" font-weight="bold" fill="#b050b8" textLength="18" lengthAdjust="spacingAndGlyphs">A</text>
<text x="1107" y="217.5" font-size="30" class="s" font-weight="bold" fill="#3f7fd0" textLength="22" lengthAdjust="spacingAndGlyphs">A</text>
<text x="1096.4" y="234" font-size="13" class="wd" textLength="39.6" lengthAdjust="spacingAndGlyphs">Change</text>
<text x="1097.4" y="246.7" font-size="13" class="wd" textLength="28.6" lengthAdjust="spacingAndGlyphs">Styles</text>
<path d="M1128.5 241h5l-2.5 3z" fill="#345"/>
<!-- Editing -->
<rect x="1154" y="192" width="5" height="6" fill="#567"/><rect x="1161" y="192" width="5" height="6" fill="#567"/><rect x="1153" y="197" width="6" height="10" fill="#5a7ea8" stroke="#345"/><rect x="1161" y="197" width="6" height="10" fill="#5a7ea8" stroke="#345"/>
<text x="1172" y="200" font-size="13" class="wd" textLength="23.5" lengthAdjust="spacingAndGlyphs">Find</text>
<path d="M1200 194h5l-2.5 3z" fill="#345"/>

<!-- Word scrollbar -->
<rect x="1214.7" y="580" width="12.6" height="217" rx="2" fill="url(#sb)" stroke="#7f99bd"/>
<path d="M1217 684h8M1217 686.5h8M1217 689h8M1217 691.5h8" stroke="#7f8ca0"/>
<path d="M1217 908h8l-4 5z" fill="#4f6a90"/>
<rect x="1213.5" y="917" width="15" height="49" fill="#a9c7ef"/>
<path d="M1219 927l2-3 2 3M1218 929h6M1221 927v4" class="n" stroke="#222"/>
<circle cx="1221" cy="941.5" r="2.6" fill="#888" stroke="#333" stroke-width=".6"/>
<path d="M1219 956l2 3 2-3M1218 955h6M1221 953v6M1218 961h6" class="n" stroke="#222"/>

<!-- Word status bar -->
<rect x="71" y="966.5" width="1159.5" height="21.5" fill="url(#st)"/>
<rect x="71" y="966" width="1160" height="1" fill="#5a83b8"/>
<rect x="939.4" y="967" width="291" height="21" fill="url(#stD)"/>
<rect x="210" y="988" width="1022" height="2" fill="#555"/>
<g font-size="13" class="wd">
<text x="82" y="981" textLength="59.5" lengthAdjust="spacingAndGlyphs">Page: 2 of 2</text>
<text x="159.6" y="981" textLength="46.7" lengthAdjust="spacingAndGlyphs">Words: 2</text>
</g>
<path d="M151 968v19M214 968v19M248 968v19" stroke="#e8f1fb"/><path d="M150 968v19M213 968v19M247 968v19" stroke="#9dbde3"/>
<path d="M223 979l10-5 7 4-9 7z" fill="#dfe8f5" stroke="#3e5f90"/><path d="M229 971l7 8m0-8l-7 8" stroke="#e33" stroke-width="2"/>
<rect x="944" y="968" width="92.7" height="18" rx="2" fill="#c2d8f3" stroke="#7d9dc6"/>
<rect x="944" y="968" width="20" height="18" fill="url(#or)"/>
<rect x="949.5" y="971" width="10" height="12" fill="#fff" stroke="#333"/><path d="M951 973.5h7M951 976h7M951 978.5h7M951 981h7" stroke="#333"/>
<path d="M967 971h6l5 2v10l-5-2h-6z" fill="#dfe" stroke="#333"/><path d="M973 971v10" stroke="#333"/>
<rect x="985" y="971" width="9" height="11" fill="#fff" stroke="#345"/><circle cx="994" cy="981" r="3" fill="#2e8bb0"/>
<path d="M1004 972h9M1007 975h6M1007 978h6M1004 981h9M1021 972h10M1021 975h10M1021 978h10M1021 981h10" stroke="#334"/>
<text x="1044.6" y="981" font-size="13" fill="#0d2a55" textLength="21.4" lengthAdjust="spacingAndGlyphs">85%</text>
<path d="M1090 977.5H1192" stroke="#dce8f7" stroke-width="1.4"/><path d="M1140 973v9" stroke="#c8dcf5"/>
<circle cx="1082.5" cy="977.5" r="7.5" fill="#c8dbf3" stroke="#5a7ea8"/><path d="M1078.5 977.5h8" stroke="#234" stroke-width="1.6"/>
<circle cx="1200" cy="977.5" r="7.5" fill="#c8dbf3" stroke="#5a7ea8"/><path d="M1196 977.5h8M1200 973.5v8" stroke="#234" stroke-width="1.6"/>
<path d="M1130.5 970h7v8l-3.5 5-3.5-5z" fill="#dfeaf8" stroke="#345a8a"/>
<path d="M1226 972h2v2h-2zM1222 976h2v2h-2zM1226 976h2v2h-2zM1218 980h2v2h-2zM1222 980h2v2h-2zM1226 980h2v2h-2z" fill="#27395a"/>

<!-- ========== DEP Watch window ========== -->
<rect x="1156.5" y="208.5" width="215.5" height="164" fill="#d4d0c8"/>
<path d="M1156.5 372V208.5H1372" class="n" stroke="#f0efeb"/><path d="M1156.5 372.5H1372V208.5" class="n" stroke="#444" stroke-width="1.2"/>
<rect x="1160" y="214.5" width="208" height="13.3" fill="url(#ig)"/>
<text x="1161.5" y="224.5" font-size="12" font-weight="bold" fill="#d4d0c8" textLength="173.2" lengthAdjust="spacingAndGlyphs">DEP Watch Window - 00020101</text>
<rect x="1357.5" y="215" width="9" height="10" fill="#d4d0c8" stroke="#333" stroke-width=".7"/><path d="M1359.5 217.5l5 5m0-5l-5 5" stroke="#000" stroke-width="1"/>
<rect x="1161.5" y="229.5" width="206.3" height="119" fill="#fff"/>
<path d="M1161.5 348V229.5H1367.5" class="n" stroke="#333"/><path d="M1161.5 348.5H1367.5V229.5" class="n" stroke="#bbb"/>
<path d="M1160.5 368V352H1368.5" class="n" stroke="#808080"/><path d="M1160.5 368.5H1368.5V352" class="n" stroke="#fff"/>
<path d="M1357 368l11-11M1361 368l7-7M1365 368l3-3" stroke="#808080"/>
</svg>
</body></html>
